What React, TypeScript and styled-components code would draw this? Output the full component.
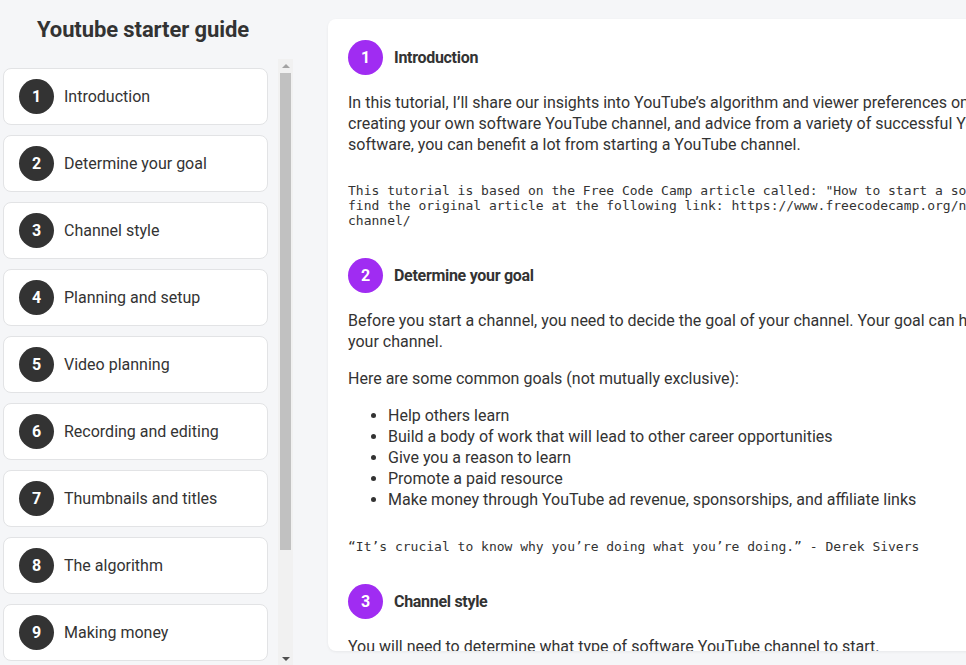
import React from "react";
import styled, { createGlobalStyle } from "styled-components";

const GlobalStyle = createGlobalStyle`
  html, body { margin: 0; padding: 0; }
  body {
    background: #f5f6f8;
    font-family: Roboto, "Liberation Sans", sans-serif;
    color: #333;
    overflow: hidden;
  }
`;

const Page = styled.div`
  display: grid;
  grid-template-columns: 293px 1fr;
  height: 100vh;
  overflow: hidden;
`;

const Sidebar = styled.aside`
  display: flex;
  flex-direction: column;
  min-height: 0;
`;

const Title = styled.h1`
  margin: 0;
  height: 59px;
  display: flex;
  align-items: center;
  justify-content: center;
  padding-right: 7px;
  font-size: 22px;
  font-weight: 700;
  color: #333;
  letter-spacing: -0.1px;
`;

const SidebarBody = styled.div`
  flex: 1;
  min-height: 0;
  display: flex;
`;

const NavList = styled.nav`
  flex: 1;
  min-width: 0;
  overflow: hidden;
  padding: 9px 10px 0 3px;
  display: flex;
  flex-direction: column;
  gap: 10px;
`;

const ScrollTrack = styled.div`
  flex: none;
  width: 15px;
  background: #f1f1f1;
  display: flex;
  flex-direction: column;
  align-items: center;
`;

const ScrollArrow = styled.div<{ $down?: boolean }>`
  flex: none;
  width: 15px;
  height: 14px;
  display: flex;
  align-items: center;
  justify-content: center;

  &::before {
    content: "";
    width: 0;
    height: 0;
    border-left: 4px solid transparent;
    border-right: 4px solid transparent;
    ${(p) =>
      p.$down
        ? "border-top: 4px solid #505050; margin-top: 1px;"
        : "border-bottom: 4px solid #a3a3a3; margin-bottom: 1px;"}
  }
`;

const ScrollThumb = styled.div`
  flex: none;
  width: 11px;
  height: 477px;
  background: #c1c1c1;
`;

const ScrollSpacer = styled.div`
  flex: 1;
`;

const NavCard = styled.div`
  flex: none;
  display: flex;
  align-items: center;
  gap: 10px;
  padding: 10px 15px;
  background: #fff;
  border: 1px solid #e2e3e5;
  border-radius: 8px;
  font-size: 16px;
  color: #333;
`;

const Badge = styled.span<{ $accent?: boolean }>`
  flex: none;
  width: 35px;
  height: 35px;
  border-radius: 50%;
  display: flex;
  align-items: center;
  justify-content: center;
  background: ${(p) => (p.$accent ? "#a02cf2" : "#333")};
  color: #fff;
  font-size: 16px;
  font-weight: 700;
`;

const Main = styled.main`
  padding: 19px 0 14px 35px;
  min-height: 0;
  overflow: hidden;
`;

const Article = styled.article`
  width: 940px;
  height: 100%;
  box-sizing: border-box;
  padding: 21px 20px 20px;
  background: #fff;
  border-radius: 8px;
  box-shadow: 0 1px 3px rgba(0, 0, 0, 0.06);
  overflow: hidden;
  font-size: 16px;
  line-height: 21px;
  color: #333;
`;

const SectionHeader = styled.div`
  display: flex;
  align-items: center;
  gap: 11px;
  margin-bottom: 17px;
`;

const SectionTitle = styled.h2`
  margin: 0;
  font-size: 16px;
  font-weight: 700;
  letter-spacing: -0.3px;
  color: #333;
`;

const Para = styled.p`
  margin: 0 0 16px;
`;

const List = styled.ul`
  margin: 0 0 16px;
  padding-left: 40px;
`;

const Mono = styled.pre<{ $top?: number }>`
  margin: ${(p) => p.$top ?? 28}px 0 30px;
  font-family: "DejaVu Sans Mono", monospace;
  font-size: 13px;
  line-height: 15px;
  white-space: pre-wrap;
  color: #333;
`;

const navItems = [
  "Introduction",
  "Determine your goal",
  "Channel style",
  "Planning and setup",
  "Video planning",
  "Recording and editing",
  "Thumbnails and titles",
  "The algorithm",
  "Making money",
  "Growing your channel",
  "Conclusion",
];

const Section: React.FC<{ n: number; title: string; children: React.ReactNode }> = ({ n, title, children }) => (
  <section>
    <SectionHeader>
      <Badge $accent>{n}</Badge>
      <SectionTitle>{title}</SectionTitle>
    </SectionHeader>
    {children}
  </section>
);

export default function App() {
  return (
    <>
      <GlobalStyle />
      <Page>
        <Sidebar>
          <Title>Youtube starter guide</Title>
          <SidebarBody>
            <NavList>
              {navItems.map((item, i) => (
                <NavCard key={item}>
                  <Badge>{i + 1}</Badge>
                  {item}
                </NavCard>
              ))}
            </NavList>
            <ScrollTrack aria-hidden>
              <ScrollArrow />
              <ScrollThumb />
              <ScrollSpacer />
              <ScrollArrow $down />
            </ScrollTrack>
          </SidebarBody>
        </Sidebar>
        <Main>
          <Article>
            <Section n={1} title="Introduction">
              <Para>
                In this tutorial, I’ll share our insights into YouTube’s algorithm and viewer preferences on starting a channel, tips and tricks for creating your own software YouTube channel, and advice from a variety of successful YouTubers. If you know a lot about software, you can benefit a lot from starting a YouTube channel.
              </Para>
              <Mono>
                This tutorial is based on the Free Code Camp article called: "How to start a software YouTube channel". You can find the original article at the following link: https://www.freecodecamp.org/news/how-to-start-a-coding-youtube-channel/
              </Mono>
            </Section>
            <Section n={2} title="Determine your goal">
              <Para>
                Before you start a channel, you need to decide the goal of your channel. Your goal can help you decide what videos to make on your channel.
              </Para>
              <Para>Here are some common goals (not mutually exclusive):</Para>
              <List>
                <li>Help others learn</li>
                <li>Build a body of work that will lead to other career opportunities</li>
                <li>Give you a reason to learn</li>
                <li>Promote a paid resource</li>
                <li>Make money through YouTube ad revenue, sponsorships, and affiliate links</li>
              </List>
              <Mono $top={29}>“It’s crucial to know why you’re doing what you’re doing.” - Derek Sivers</Mono>
            </Section>
            <Section n={3} title="Channel style">
              <Para>
                You will need to determine what type of software YouTube channel to start.
              </Para>
            </Section>
          </Article>
        </Main>
      </Page>
    </>
  );
}
